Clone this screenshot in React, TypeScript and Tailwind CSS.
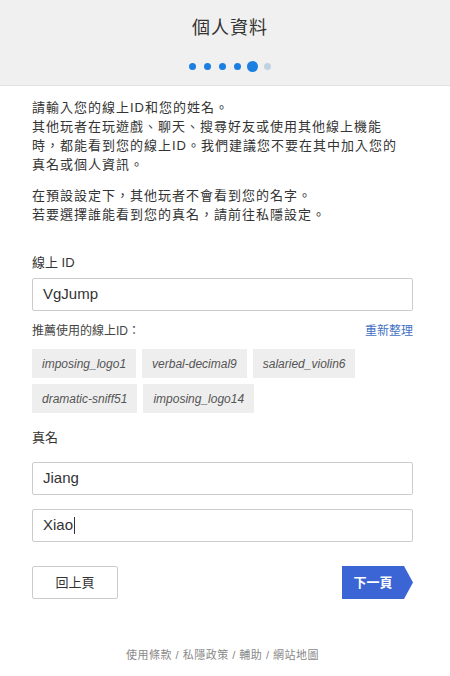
import React from 'react';

const cjk = "font-['Liberation_Sans','Noto_Sans_CJK_TC',sans-serif]";

const suggestions = [
  ['imposing_logo1', 'verbal-decimal9', 'salaried_violin6'],
  ['dramatic-sniff51', 'imposing_logo14'],
];

function Dots() {
  return (
    <div className="mt-[21px] flex items-center justify-center">
      <span className="h-[7px] w-[7px] rounded-full bg-[#1a7fe0]" />
      <span className="ml-[8px] h-[7px] w-[7px] rounded-full bg-[#1a7fe0]" />
      <span className="ml-[8px] h-[7px] w-[7px] rounded-full bg-[#1a7fe0]" />
      <span className="ml-[8px] h-[7px] w-[7px] rounded-full bg-[#1a7fe0]" />
      <span className="ml-[6px] h-[11px] w-[11px] rounded-full bg-[#1a7fe0]" />
      <span className="ml-[6px] h-[7px] w-[7px] rounded-full bg-[#bfd2e2]" />
    </div>
  );
}

function TextInput({ value, caret }: { value: string; caret?: boolean }) {
  return (
    <div className="flex h-[33px] items-center rounded-[2px] border border-[#cccccc] bg-white px-[10px] text-[15px] text-[#333]">
      <span>{value}</span>
      {caret && <span className="ml-[1px] h-[17px] w-px bg-[#333]" />}
    </div>
  );
}

export default function App() {
  return (
    <div className={`${cjk} min-h-[676px] w-[450px] bg-white text-[#333]`}>
      <header className="h-[86px] border-b border-[#e2e2e2] bg-[#f0f0f0] pl-[10px] pt-[16px]">
        <h1 className="text-center text-[18px] leading-[24px] tracking-[1px] text-[#333]">個人資料</h1>
        <Dots />
      </header>

      <main className="pl-[32px] pr-[37px] pt-[12px]">
        <p className="text-[13px] leading-[19px] tracking-[1px]">
          請輸入您的線上ID和您的姓名。
          <br />
          其他玩者在玩遊戲、聊天、搜尋好友或使用其他線上機能
          <br />
          時，都能看到您的線上ID。我們建議您不要在其中加入您的
          <br />
          真名或個人資訊。
        </p>
        <p className="mt-[12px] text-[13px] leading-[19px] tracking-[1px]">
          在預設設定下，其他玩者不會看到您的名字。
          <br />
          若要選擇誰能看到您的真名，請前往私隱設定。
        </p>

        <label className="mt-[29px] block text-[13px] leading-[19px]">線上 ID</label>
        <div className="mt-[6px]">
          <TextInput value="VgJump" />
        </div>

        <div className="mt-[12px] flex items-center justify-between text-[12px] leading-[16px]">
          <span className="text-[#444]">推薦使用的線上ID：</span>
          <span className="text-[#3f6fc4]">重新整理</span>
        </div>

        <div className="mt-[10px] flex flex-col gap-[6px]">
          {suggestions.map((row, i) => (
            <div key={i} className="flex gap-[6px]">
              {row.map((s) => (
                <span
                  key={s}
                  className="flex h-[29px] items-center bg-[#eeeeee] px-[10px] text-[12px] italic text-[#555]"
                >
                  {s}
                </span>
              ))}
            </div>
          ))}
        </div>

        <label className="mt-[15px] block text-[13px] leading-[19px]">真名</label>
        <div className="mt-[15px] flex flex-col gap-[14px]">
          <TextInput value="Jiang" />
          <TextInput value="Xiao" caret />
        </div>

        <div className="mt-[24px] flex items-center justify-between">
          <button className="h-[33px] w-[86px] rounded-[2px] border border-[#cccccc] bg-white text-[13px] text-[#333]">
            回上頁
          </button>
          <button className="h-[33px] w-[71px] bg-[#3b64d5] pr-[9px] text-[13px] font-semibold text-white [clip-path:polygon(0_0,calc(100%-9px)_0,100%_50%,calc(100%-9px)_100%,0_100%)]">
            下一頁
          </button>
        </div>

        <footer className="mt-[48px] text-center text-[11px] leading-[16px] tracking-[0.5px] text-[#888]">
          使用條款 / 私隱政策 / 輔助 / 網站地圖
        </footer>
      </main>
    </div>
  );
}
